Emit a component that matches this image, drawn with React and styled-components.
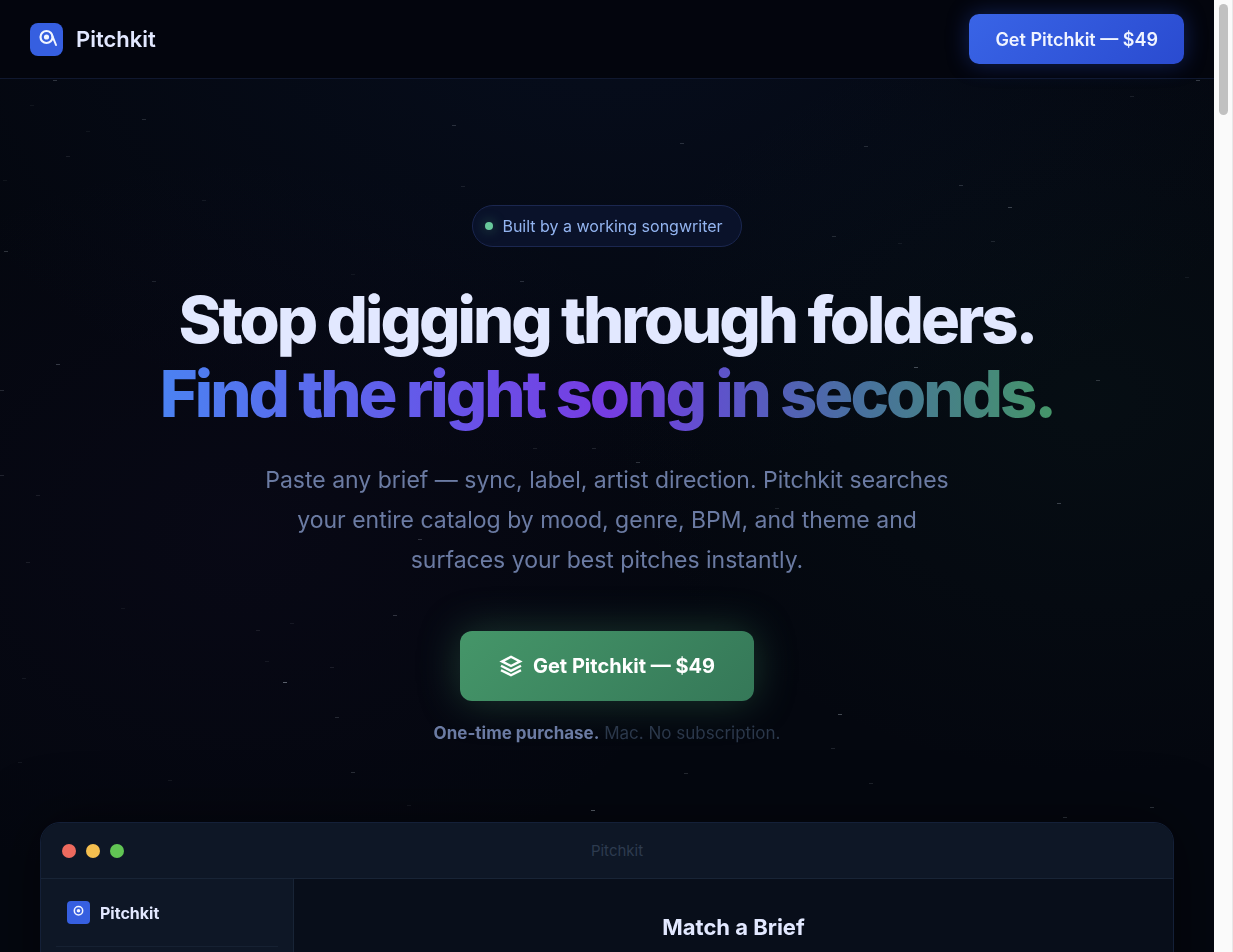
import styled, { createGlobalStyle } from "styled-components";

const GlobalStyle = createGlobalStyle`
  * {
    box-sizing: border-box;
  }
  body {
    margin: 0;
    background: #03060e;
    color: #e2e8ff;
    font-family: Inter, "Liberation Sans", sans-serif;
  }
  h1, h2, p {
    margin: 0;
  }
`;

const Viewport = styled.div`
  display: flex;
  height: 100vh;
  overflow: hidden;
`;

const Page = styled.div`
  position: relative;
  flex: 1;
  min-width: 0;
  overflow: hidden;
  background:
    radial-gradient(ellipse 60% 50% at 50% 0%, rgba(20, 50, 110, 0.14), transparent),
    radial-gradient(ellipse 40% 40% at 90% 42%, rgba(30, 90, 70, 0.08), transparent),
    radial-gradient(ellipse 40% 40% at 20% 56%, rgba(70, 30, 120, 0.06), transparent),
    #04070f;
`;

const ScrollTrack = styled.div`
  width: 19px;
  padding: 4px 4px 4px 5px;
  background: #fafafa;
  border-right: 1px solid #e8e8e8;
`;

const ScrollThumb = styled.div`
  height: 111px;
  border-radius: 5px;
  background: #c1c1c1;
`;

const StarField = styled.svg`
  position: absolute;
  top: 0;
  left: 0;
  width: 100%;
  height: 100%;
  pointer-events: none;
`;

const Header = styled.header`
  position: relative;
  display: flex;
  align-items: center;
  justify-content: space-between;
  height: 79px;
  padding: 0 30px;
  background: #03050d;
  border-bottom: 1px solid #10182f;
`;

const Brand = styled.a`
  display: flex;
  align-items: center;
  gap: ${props => props.$small ? "10px" : "13px"};
  color: #e2e8ff;
  font-size: ${props => props.$small ? "16px" : "22px"};
  font-weight: ${props => props.$small ? 700 : 600};
  text-decoration: none;
`;

const LogoBox = styled.span`
  display: grid;
  width: ${props => props.$size}px;
  height: ${props => props.$size}px;
  border-radius: ${props => props.$size > 30 ? 8 : 4}px;
  background: #365fe0;
`;

const NavButton = styled.button`
  height: 50px;
  padding: 0 26px;
  border: 0;
  border-radius: 10px;
  background: linear-gradient(135deg, #3964e6, #2a4bd0);
  box-shadow: 0 0 22px rgba(45, 85, 225, 0.35);
  color: #f0f4ff;
  font: 600 18px Inter, sans-serif;
  cursor: pointer;
`;

const Hero = styled.main`
  position: relative;
  display: flex;
  flex-direction: column;
  align-items: center;
  padding: 126px 40px 0;
  text-align: center;
`;

const Badge = styled.div`
  display: flex;
  align-items: center;
  gap: 9px;
  height: 42px;
  padding: 0 18px 0 12px;
  border: 1px solid #1b2750;
  border-radius: 21px;
  background: #0a122a;
  color: #93b4f0;
  font-size: 16px;
`;

const BadgeDot = styled.span`
  width: 8px;
  height: 8px;
  border-radius: 50%;
  background: #68c89b;
  box-shadow: 0 0 12px rgba(80, 180, 130, 0.5);
`;

const Headline = styled.h1`
  margin-top: 36px;
  font-size: 65px;
  font-weight: 800;
  line-height: 74px;
  letter-spacing: -3px;
`;

const GradientLine = styled.span`
  display: table;
  margin: 0 auto;
  padding-bottom: 4px;
  background: linear-gradient(90deg, #4b82f2, #763ce2 50%, #5a57c6 65%, #48709f 78%, #459669);
  background-clip: text;
  color: transparent;
`;

const Lead = styled.p`
  max-width: 700px;
  margin-top: 25px;
  color: #6b7ba3;
  font-size: 23px;
  line-height: 40px;
`;

const BuyButton = styled.button`
  display: flex;
  align-items: center;
  gap: 10px;
  height: 70px;
  margin-top: 51px;
  padding: 0 39px;
  border: 0;
  border-radius: 12px;
  background: linear-gradient(135deg, #459669, #357858);
  box-shadow: 0 0 40px rgba(69, 150, 105, 0.35);
  color: #fff;
  font: 700 20px Inter, sans-serif;
  cursor: pointer;
`;

const Note = styled.p`
  margin-top: 20px;
  color: #2b384b;
  font-size: 17px;
  line-height: 24px;

  strong {
    color: #6b7ba3;
    font-weight: 700;
  }
`;

const AppWindow = styled.section`
  width: 100%;
  margin-top: 77px;
  border: 1px solid #142038;
  border-radius: 20px 20px 0 0;
  background: #080e1a;
  box-shadow: 0 0 60px rgba(0, 0, 0, 0.5);
  overflow: hidden;
`;

const TitleBar = styled.div`
  display: grid;
  grid-template-columns: 62px 1fr 42px;
  align-items: center;
  height: 56px;
  padding: 0 21px;
  border-bottom: 1px solid #182436;
  background: #0e1726;
  color: #2d3b4f;
  font-size: 15px;
`;

const Lights = styled.div`
  display: flex;
  gap: 10px;
`;

const Light = styled.span`
  width: 14px;
  height: 14px;
  border-radius: 50%;
  background: ${props => props.$color};
`;

const WindowBody = styled.div`
  display: grid;
  grid-template-columns: 253px 1fr;
  min-height: 560px;
`;

const Sidebar = styled.aside`
  padding: 0 15px;
  border-right: 1px solid #182436;
  background: #0e1726;
`;

const SidebarHead = styled.div`
  display: flex;
  align-items: center;
  height: 68px;
  padding: 0 11px;
  border-bottom: 1px solid #162132;
`;

const Panel = styled.div`
  padding: 33px 20px;
`;

const PanelTitle = styled.h2`
  font-size: 22px;
  font-weight: 700;
  line-height: 30px;
`;

// [x, y, opacity]
const stars = [
  [55, 80, 0.4], [32, 105, 0.12], [88, 131, 0.12], [144, 119, 0.3], [68, 156, 0.2], [454, 125, 0.35],
  [682, 143, 0.35], [866, 146, 0.3], [1132, 96, 0.2], [1198, 80, 0.45], [961, 185, 0.35], [1010, 207, 0.5],
  [463, 186, 0.2], [6, 251, 0.4], [5, 180, 0.12], [204, 200, 0.15], [834, 236, 0.3], [900, 243, 0.15],
  [993, 241, 0.25], [154, 281, 0.25], [522, 281, 0.35], [353, 274, 0.12], [1187, 277, 0.15], [58, 364, 0.45],
  [2, 390, 0.3], [916, 367, 0.6], [1098, 380, 0.4], [2, 475, 0.25], [38, 495, 0.2], [535, 448, 0.2],
  [638, 462, 0.4], [594, 448, 0.25], [1059, 503, 0.5], [777, 508, 0.25], [420, 539, 0.4], [28, 562, 0.2],
  [123, 608, 0.12], [395, 615, 0.4], [258, 630, 0.2], [292, 623, 0.15], [285, 682, 0.8], [267, 661, 0.15],
  [332, 667, 0.2], [24, 678, 0.15], [337, 717, 0.3], [840, 714, 0.6], [833, 748, 0.25], [20, 762, 0.15],
  [353, 772, 0.35], [686, 773, 0.3], [170, 780, 0.15], [593, 810, 0.8], [1152, 807, 0.4], [1065, 817, 0.4],
  [409, 805, 0.15], [871, 783, 0.25],
];

const Stars = () => (
  <StarField aria-hidden="true">
    <g opacity="0.65">
      {stars.map(([x, y, opacity], idx) => (
        <rect key={idx} x={x - 2} y={y} width="4" height="1" fill="#aab4c0" opacity={opacity} />
      ))}
    </g>
  </StarField>
);

const Logo = ({ size, tail }) => (
  <LogoBox $size={size}>
    <svg width={size} height={size} viewBox="0 0 33 33" fill="none" aria-hidden="true">
      <circle cx="16.5" cy="14" r="6" stroke="#f1f5ff" strokeWidth="2.2" />
      <circle cx="16.5" cy="14" r="2.6" fill="#f1f5ff" />
      {tail && <path d="M22.2 12.5L26 22" stroke="#f1f5ff" strokeWidth="2" strokeLinecap="round" />}
    </svg>
  </LogoBox>
);

const LayersIcon = () => (
  <svg width="24" height="24" viewBox="0 0 24 24" fill="none" stroke="currentColor" strokeWidth="2.4" aria-hidden="true">
    <path d="M12 2.8L21 7.4L12 12L3 7.4Z" />
    <path d="M2 11.8L12 16.8L22 11.8" />
    <path d="M2 16.2L12 21.2L22 16.2" />
  </svg>
);

const App = () => {
  return (
    <>
      <GlobalStyle />
      <Viewport>
        <Page>
          <Stars />
          <Header>
            <Brand href="#">
              <Logo size={33} tail />
              Pitchkit
            </Brand>
            <NavButton type="button">Get Pitchkit — $49</NavButton>
          </Header>
          <Hero>
            <Badge>
              <BadgeDot />
              Built by a working songwriter
            </Badge>
            <Headline>
              Stop digging through folders.
              <GradientLine>Find the right song in seconds.</GradientLine>
            </Headline>
            <Lead>
              Paste any brief — sync, label, artist direction. Pitchkit searches your entire
              catalog by mood, genre, BPM, and theme and surfaces your best pitches instantly.
            </Lead>
            <BuyButton type="button">
              <LayersIcon />
              Get Pitchkit — $49
            </BuyButton>
            <Note>
              <strong>One-time purchase.</strong> Mac. No subscription.
            </Note>
            <AppWindow>
              <TitleBar>
                <Lights>
                  <Light $color="#ed6a5e" />
                  <Light $color="#f5bf4f" />
                  <Light $color="#61c554" />
                </Lights>
                <span>Pitchkit</span>
              </TitleBar>
              <WindowBody>
                <Sidebar>
                  <SidebarHead>
                    <Brand href="#" $small>
                      <Logo size={23} />
                      Pitchkit
                    </Brand>
                  </SidebarHead>
                </Sidebar>
                <Panel>
                  <PanelTitle>Match a Brief</PanelTitle>
                </Panel>
              </WindowBody>
            </AppWindow>
          </Hero>
        </Page>
        <ScrollTrack aria-hidden="true">
          <ScrollThumb />
        </ScrollTrack>
      </Viewport>
    </>
  );
}

export default App;
